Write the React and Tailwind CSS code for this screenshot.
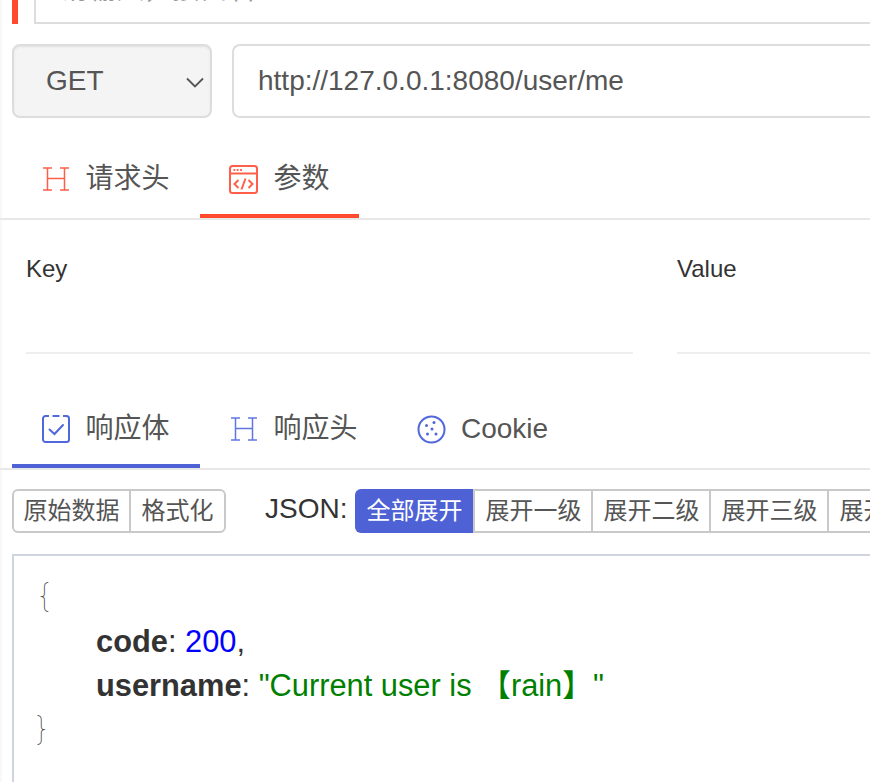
import React from "react";

const CJK = "font-['Liberation_Sans','Noto_Sans_CJK_SC',sans-serif]";

function HIcon({ color }) {
  return (
    <svg width="28" height="24" viewBox="0 0 28 24" fill="none" stroke={color} strokeWidth="1.5">
      <path d="M1 1h9M18 1h9M1 23h9M18 23h9M5.500 1v22M22.500 1v22M5.500 11.500h17" />
    </svg>
  );
}

function CodeIcon({ color }) {
  return (
    <svg width="29" height="29" viewBox="0 0 29 29" fill="none" stroke={color} strokeWidth="2">
      <rect x="1" y="1" width="27" height="27" rx="2.500" />
      <path d="M1 8.500h27" />
      <path d="M4.500 5h1.800M7.800 5h1.800M11.100 5h1.800" />
      <path d="M9.500 15l-4 4 4 4M19.500 15l4 4-4 4M16.500 13.500l-4 11" />
    </svg>
  );
}

function CheckIcon({ color }) {
  return (
    <svg width="28" height="28" viewBox="0 0 28 28" fill="none" stroke={color} strokeWidth="2">
      <path d="M7 1H3.500A2.500 2.500 0 0 0 1 3.500V24.500a2.500 2.500 0 0 0 2.500 2.500h21A2.500 2.500 0 0 0 27 24.500V3.500A2.500 2.500 0 0 0 24.500 1H21" />
      <path d="M10.500 1h7" />
      <path d="M7.500 14.500l5 4.500 8.500-9" strokeLinecap="round" />
    </svg>
  );
}

function CookieIcon({ color }) {
  return (
    <svg width="29" height="29" viewBox="0 0 29 29" fill="none" stroke={color} strokeWidth="2">
      <circle cx="14.500" cy="14.500" r="13" />
      <g fill={color} stroke="none">
        <circle cx="9.500" cy="10.500" r="1.500" />
        <circle cx="17" cy="7.500" r="1.500" />
        <circle cx="15" cy="14" r="1.500" />
        <circle cx="10.500" cy="19" r="1.500" />
        <circle cx="19" cy="19" r="1.500" />
      </g>
    </svg>
  );
}

function Tab({ icon, label, active, color, width }) {
  return (
    <div
      className={`flex h-[74px] items-center justify-center gap-[15px] border-b-[4px] ${width}`}
      style={{ borderColor: active ? color : "transparent" }}
    >
      {icon}
      <span className="text-[28px] text-[#555555]">{label}</span>
    </div>
  );
}

const levels = ["展开一级", "展开二级", "展开三级", "展开四级"];

export default function App() {
  return (
    <div className={`h-[782px] w-[870px] overflow-hidden bg-white shadow-[inset_2px_0_0_#f8f8f8] ${CJK}`}>
      <div className="flex h-[24px] items-end gap-[16px] pl-[12px]">
        <div className="h-[24px] w-[6px] shrink-0 bg-[#ff4a2e]" />
        <div className="relative h-[24px] min-w-0 flex-1 overflow-hidden border-b-[2px] border-l-[2px] border-[#dddddd]">
          <span className="absolute left-[24px] top-[-30px] text-[28px] leading-[40px] text-[#999999]">请输入，接口名</span>
        </div>
      </div>

      <div className="mt-[20px] flex h-[74px] gap-[20px] pl-[12px]">
        <div className="relative flex w-[200px] shrink-0 items-center rounded-[8px] border-[2px] border-[#dddddd] bg-[#f4f4f4] pl-[32px] shadow-[inset_0_1px_2px_rgba(0,0,0,0.08)]">
          <span className="text-[28px] text-[#555555]">GET</span>
          <svg className="absolute right-[6px] top-[31px]" width="18" height="11" viewBox="0 0 18 11" fill="none" stroke="#555555" strokeWidth="1.800">
            <path d="M1 1.500L9 9.500l8-8" />
          </svg>
        </div>
        <div className="flex min-w-0 flex-1 items-center rounded-l-[8px] border-y-[2px] border-l-[2px] border-[#dddddd] pl-[24px]">
          <span className="text-[28px] text-[#555555]">http://127.0.0.1:8080/user/me</span>
        </div>
      </div>

      <div className="mt-[26px] flex h-[76px] border-b-[2px] border-[#e8e8e8] pl-[12px]">
        <Tab width="w-[188px]" color="#ff4a2e" label="请求头" icon={<HIcon color="#ff5f4a" />} />
        <Tab width="w-[159px]" color="#ff4a2e" active label="参数" icon={<CodeIcon color="#ff5f4a" />} />
      </div>

      <div className="mt-[32px] flex h-[102px] gap-[44px] pl-[26px]">
        <div className="h-full w-[607px] shrink-0 border-b-[2px] border-[#eeeeee]">
          <div className="text-[24px] leading-[34px] text-[#333333]">Key</div>
        </div>
        <div className="h-full flex-1 border-b-[2px] border-[#eeeeee]">
          <div className="text-[24px] leading-[34px] text-[#333333]">Value</div>
        </div>
      </div>

      <div className="mt-[40px] flex h-[76px] border-b-[2px] border-[#e8e8e8] pl-[12px]">
        <Tab width="w-[188px]" color="#4e62d6" active label="响应体" icon={<CheckIcon color="#5068dc" />} />
        <Tab width="w-[188px]" color="#4e62d6" label="响应头" icon={<HIcon color="#6075e2" />} />
        <Tab width="w-[189px]" color="#4e62d6" label="Cookie" icon={<CookieIcon color="#5068dc" />} />
      </div>

      <div className="mt-[19px] flex h-[44px] items-center pl-[12px]">
        <div className="flex h-[44px] shrink-0 overflow-hidden rounded-[6px] border-[2px] border-[#c9c9c9] text-[24px] text-[#555555]">
          <div className="flex w-[117px] items-center justify-center border-r-[2px] border-[#c9c9c9]">原始数据</div>
          <div className="flex w-[93px] items-center justify-center">格式化</div>
        </div>
        <span className="mb-[5px] ml-[39px] mr-[8px] shrink-0 text-[28px] leading-[40px] text-[#333333]">JSON:</span>
        <div className="flex h-[44px] shrink-0 text-[24px] text-[#555555]">
          <div className="flex w-[118px] items-center justify-center rounded-l-[6px] bg-[#4e62d6] text-white">全部展开</div>
          {levels.map((l) => (
            <div key={l} className="flex w-[118px] items-center justify-center border-y-[2px] border-l-[2px] border-[#c9c9c9]">
              {l}
            </div>
          ))}
        </div>
      </div>

      <div className="ml-[12px] mt-[21px] h-[240px] border-l-[2px] border-t-[2px] border-[#d0d4dc] pl-[24px] pt-[18px] text-[30.8px] leading-[44px] text-[#333333]">
        <div className="h-[46px] font-['Inter',sans-serif] text-[32px] font-thin leading-[44px] text-[#333333]">{"{"}</div>
        <div className="pl-[58px]">
          <b>code</b>: <span className="text-[#0000ff]">200</span>,
        </div>
        <div className="pl-[58px]">
          <b>username</b>: <span className="text-[#008000]">"Current user is 【rain】"</span>
        </div>
        <div className="-ml-[3px] font-['Inter',sans-serif] text-[32px] font-thin leading-[42px] text-[#333333]">{"}"}</div>
      </div>
    </div>
  );
}
